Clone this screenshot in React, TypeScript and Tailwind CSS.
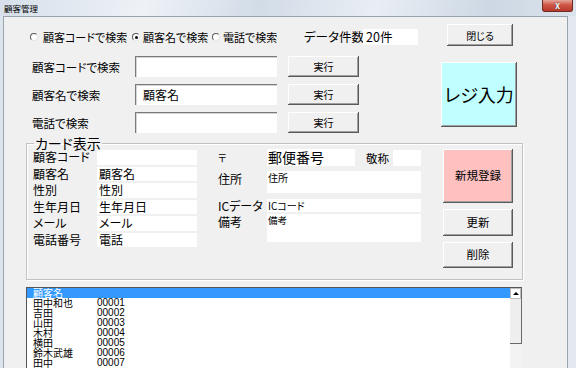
import type React from "react"

const raised =
  "bg-[#f0f0f0] shadow-[inset_-1px_-1px_0_#5a5a5a,inset_1px_1px_0_#ffffff,inset_-2px_-2px_0_#a0a0a0]"
const sunken = "bg-white shadow-[inset_1px_1px_0_#7a7a7a,inset_2px_2px_0_#d4d4d4]"

function Btn({ className = "", children }: { className?: string; children: React.ReactNode }) {
  return <div className={`flex items-center justify-center ${raised} ${className}`}>{children}</div>
}

function Radio({ checked = false }: { checked?: boolean }) {
  return (
    <div className="w-[8px] h-[8px] rounded-full bg-white border border-t-[#5a5a5a] border-l-[#5a5a5a] border-r-[#e6e6e6] border-b-[#e6e6e6] flex items-center justify-center shrink-0">
      {checked && <div className="w-[3px] h-[3px] rounded-full bg-black" />}
    </div>
  )
}

const customers = [
  ["田中和也", "00001"],
  ["吉田", "00002"],
  ["山田", "00003"],
  ["木村", "00004"],
  ["横田", "00005"],
  ["鈴木武雄", "00006"],
  ["田中", "00007"],
]

const cardRows = [
  ["顧客コード", ""],
  ["顧客名", "顧客名"],
  ["性別", "性別"],
  ["生年月日", "生年月日"],
  ["メール", "メール"],
  ["電話番号", "電話"],
]

export default function App() {
  return (
    <div className="w-[576px] h-[368px] overflow-hidden flex flex-col whitespace-nowrap bg-[#dce4ed] text-black [font-family:'Noto_Sans_CJK_JP','Noto_Sans',sans-serif] [font-feature-settings:'palt']">
      {/* title bar */}
      <div className="h-[16px] shrink-0 flex items-start justify-between bg-[linear-gradient(100deg,#d6dfea,#eef2f7_25%,#d2dce7_45%,#e9eef4_65%,#cdd8e4_85%,#dbe3ec)]">
        <span className="pl-[4px] pt-[4px] text-[8.5px] leading-[9px]">顧客管理</span>
        <div className="mr-[3px] w-[31px] h-[12px] rounded-b-[3px] border border-t-0 border-[#6e2a22] bg-[linear-gradient(#e6a79c,#cf5646_45%,#b8392b)] flex items-center justify-center">
          <span className="text-white text-[9px] leading-[9px] font-bold [text-shadow:0_0_1px_#000]">x</span>
        </div>
      </div>

      <div className="flex-1 flex">
        <div className="w-[3px] shrink-0" />
        {/* client area */}
        <div className="w-[565px] shrink-0 bg-[#f0f0f0] border-t border-l border-r border-[#9aa4ae] flex flex-col">
          {/* top section */}
          <div className="flex items-start pt-[7px]">
            <div className="ml-[24px] w-[390px]">
              <div className="mt-[4px] h-[18px] flex items-center text-[11px] leading-[14px]">
                <div className="ml-[2px] w-[102px] flex items-center gap-[5px]">
                  <Radio />
                  <span>顧客コードで検索</span>
                </div>
                <div className="w-[80px] flex items-center gap-[3px]">
                  <Radio checked />
                  <span>顧客名で検索</span>
                </div>
                <div className="w-[92px] flex items-center gap-[3px]">
                  <Radio />
                  <span>電話で検索</span>
                </div>
                <span className="w-[59px] text-[12.5px]">データ件数</span>
                <div className="w-[55px] h-[16px] bg-white pl-[3px] text-[12.5px] leading-[16px]">20件</div>
              </div>

              <div className="mt-[10px] flex flex-col gap-[7px] text-[11.5px] leading-[14px]">
                {[
                  ["顧客コードで検索", ""],
                  ["顧客名で検索", "顧客名"],
                  ["電話で検索", ""],
                ].map(([label, value]) => (
                  <div key={label} className="h-[21px] flex items-center">
                    <span className="ml-[4px] w-[103px]">{label}</span>
                    <div className={`w-[142px] h-[21px] ${sunken} pl-[8px] flex items-center text-[12px]`}>
                      {value}
                    </div>
                    <Btn className="ml-[11px] w-[71px] h-[21px] text-[10px]">実行</Btn>
                  </div>
                ))}
              </div>
            </div>

            <div className="ml-[23px] w-[76px]">
              <Btn className="ml-[6px] w-[66px] h-[22px] text-[10px]">閉じる</Btn>
              <Btn className="mt-[16px] w-[76px] h-[65px] text-[18px] !bg-[#c0ffff]">レジ入力</Btn>
            </div>
          </div>

          {/* card frame */}
          <fieldset className="mt-[3px] ml-[22px] w-[497px] border border-[#c2c2c2] shadow-[1px_1px_0_#ffffff,inset_1px_1px_0_#ffffff] pb-[11px]">
            <legend className="ml-[7px] px-[1px] text-[14px] leading-[14px]">カード表示</legend>
            <div className="-mt-[1px] flex items-start">
              <div className="mt-[1px] ml-[6px] flex flex-col gap-[2px] text-[12px] leading-[14px]">
                {cardRows.map(([label, value]) => (
                  <div key={label} className="h-[14.5px] flex items-center">
                    <span className="w-[64px]">{label}</span>
                    <div className="w-[100px] h-[14.5px] bg-white pl-[2px]">{value}</div>
                  </div>
                ))}
              </div>

              <div className="ml-[21px] w-[203px] flex flex-col">
                <div className="h-[17px] flex items-center">
                  <span className="w-[49px] text-[10px] leading-[12px]">〒</span>
                  <div className="w-[88px] h-[17px] bg-white pl-[1px] text-[14px] leading-[17px]">郵便番号</div>
                  <span className="ml-[11px] w-[27px] text-[11.5px] leading-[14px]">敬称</span>
                  <div className="w-[28px] h-[16px] bg-white" />
                </div>
                <div className="mt-[5px] flex items-start">
                  <span className="w-[49px] pt-[1px] text-[12px] leading-[14px]">住所</span>
                  <div className="w-[154px] h-[22px] bg-white pl-[1px] text-[10px] leading-[14px]">住所</div>
                </div>
                <div className="mt-[6px] flex items-center">
                  <span className="w-[49px] text-[12px] leading-[13px]">ICデータ</span>
                  <div className="w-[154px] h-[13px] bg-white pl-[1px] text-[10px] leading-[13px]">ICコード</div>
                </div>
                <div className="mt-[2px] flex items-start">
                  <span className="w-[49px] pt-[1px] text-[12px] leading-[14px]">備考</span>
                  <div className="w-[154px] h-[28px] bg-white pl-[1px] text-[9.5px] leading-[12px]">備考</div>
                </div>
              </div>

              <div className="ml-[22px] w-[70px] flex flex-col text-[11.5px]">
                <Btn className="h-[54px] !bg-[#ffc0c0]">新規登録</Btn>
                <Btn className="mt-[6px] h-[27px]">更新</Btn>
                <Btn className="mt-[6px] h-[26px]">削除</Btn>
              </div>
            </div>
          </fieldset>

          {/* customer list */}
          <div className="mt-[7px] ml-[22px] w-[496px] flex flex-1">
            <div className="w-[484px] bg-white border-t border-l border-[#555555] text-[10px] leading-[10px]">
              <div className="h-[10px] bg-[#3399ff] text-white pl-[6px]">顧客名</div>
              {customers.map(([name, code]) => (
                <div key={code} className="h-[10px] flex">
                  <span className="w-[70px] pl-[6px]">{name}</span>
                  <span className="[font-family:'Liberation_Sans',sans-serif] text-[10px]">{code}</span>
                </div>
              ))}
            </div>
            <div className="w-[12px] flex flex-col">
              <div className="h-[57px] bg-[#eeeeee] border-t border-[#555555] border-r border-b border-r-[#6a6a6a] border-b-[#6a6a6a]">
                <div className="h-[11px] bg-white border border-[#bdbdbd] flex items-center justify-center">
                  <div className="w-0 h-0 border-l-[3px] border-r-[3px] border-b-[3px] border-l-transparent border-r-transparent border-b-black" />
                </div>
              </div>
              <div className="flex-1 bg-[#f3f3f3]" />
            </div>
          </div>
        </div>
        <div className="flex-1 bg-[#e4e9ef]" />
      </div>
    </div>
  )
}
